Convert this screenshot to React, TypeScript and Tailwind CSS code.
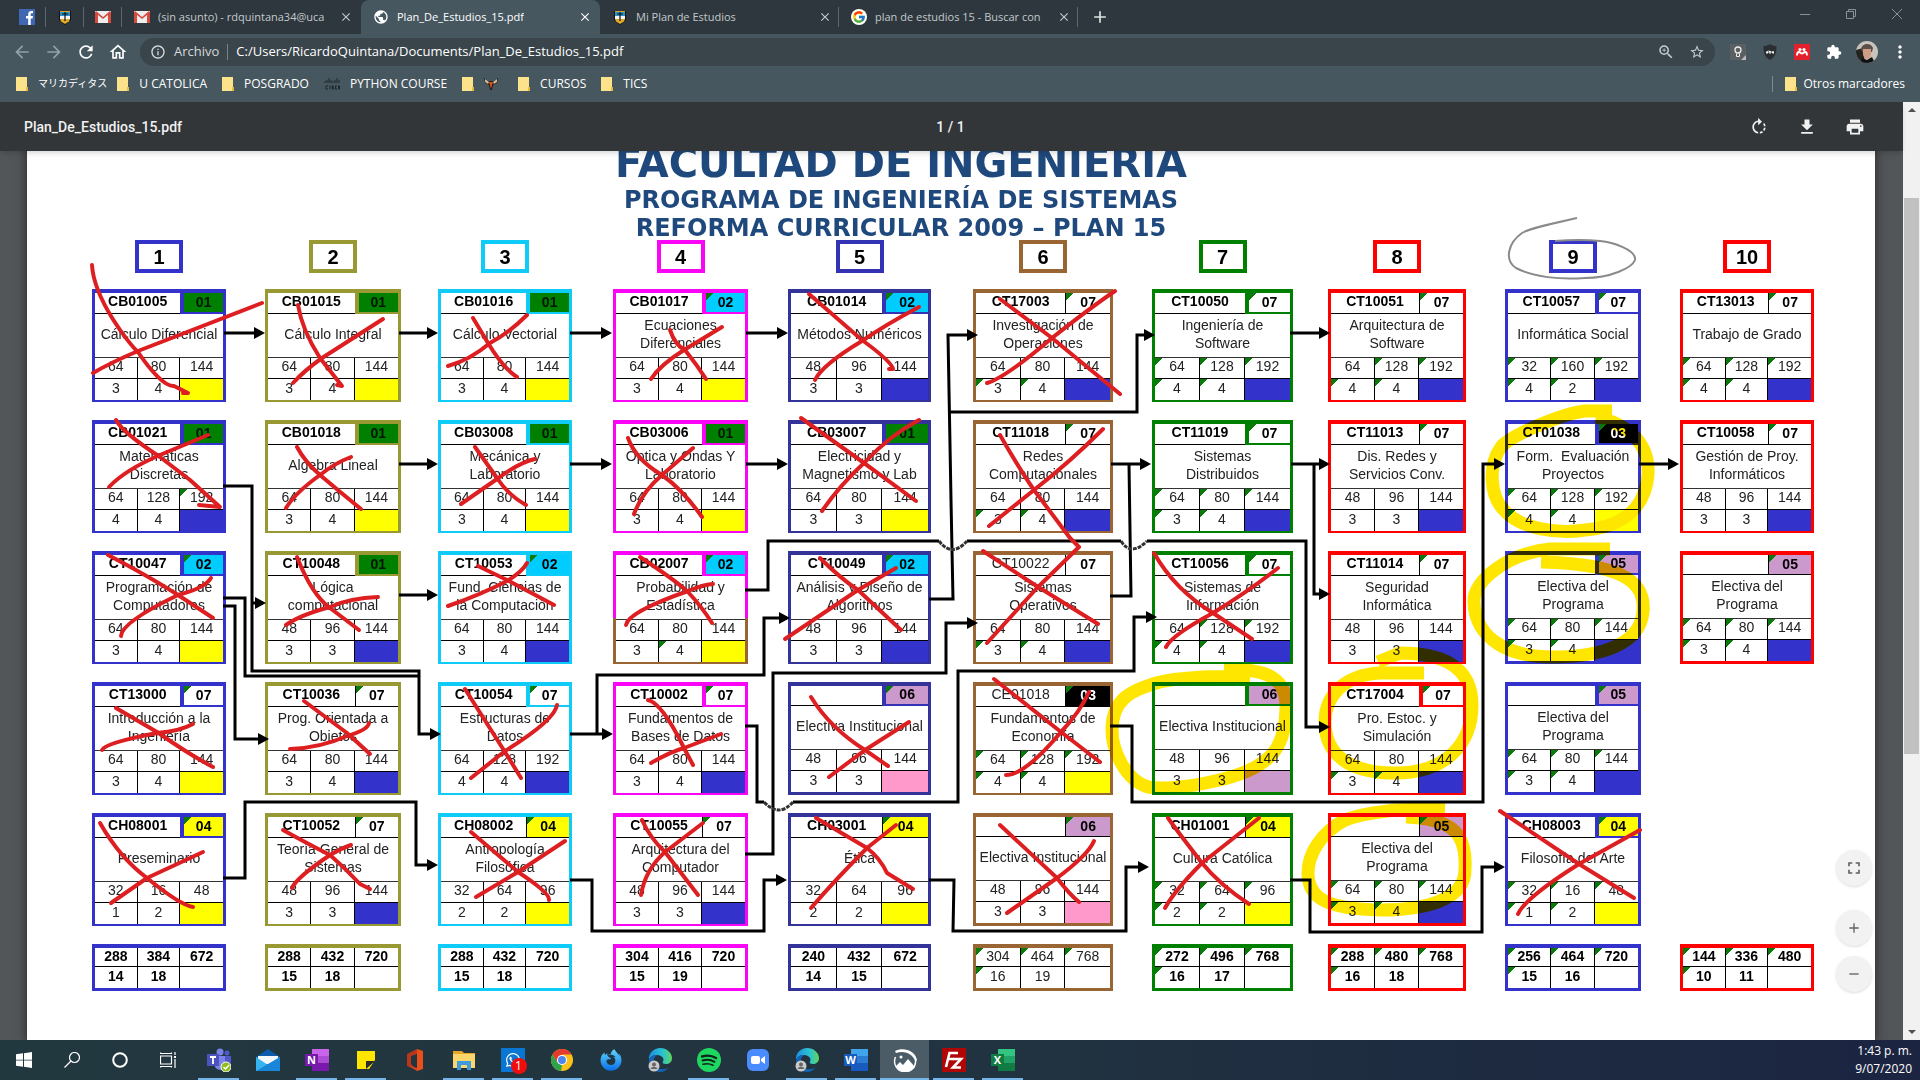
import React from "react";
import {
  MdArrowBack, MdArrowForward, MdRefresh, MdOutlineHome, MdInfoOutline, MdStarBorder, MdZoomIn,
  MdExtension, MdMoreVert, MdRotateRight, MdFileDownload, MdPrint, MdFullscreen, MdPublic, MdClose,
  MdAdd, MdRemove,
} from "react-icons/md";
import { FcGoogle } from "react-icons/fc";
import { FaFirefoxBrowser, FaWhatsapp } from "react-icons/fa";

/* ---------- Curriculum data ---------- */

type Fill = "blue" | "yellow" | "pink" | "plum";

type Course = {
  code: string;
  type: string;
  name: string;
  hours: [number, number, number];
  credits: [number, number];
  fill: Fill;
  marks?: string;
  boxed?: boolean;
  light?: boolean;
  split?: boolean;
};

type Semester = {
  n: number;
  place: string;
  frame: string;
  edge: string;
  courses: (Course | null)[];
  totals: [number, number, number, number, number];
  totalMarks?: string;
  light?: boolean;
};

const c = (
  code: string, type: string, name: string,
  hours: [number, number, number], credits: [number, number],
  fill: Fill, marks = "", extra: Partial<Course> = {},
): Course => ({ code, type, name, hours, credits, fill, marks, ...extra });

const B = { boxed: true };
const ALL = "b12345";

const semesters: Semester[] = [
  {
    n: 1, place: "col-start-2", frame: "bg-[#3333cc]", edge: "border-[#3333cc]",
    courses: [
      c("CB01005", "01", "Cálculo Diferencial", [64, 80, 144], [3, 4], "yellow", "", B),
      c("CB01021", "01", "Matemáticas\nDiscretas", [64, 128, 192], [4, 4], "blue", "3", B),
      c("CT10047", "02", "Programación de\nComputadores", [64, 80, 144], [3, 4], "yellow", "b", B),
      c("CT13000", "07", "Introducción a la\nIngeniería", [64, 80, 144], [3, 4], "yellow", "b", B),
      c("CH08001", "04", "Preseminario", [32, 16, 48], [1, 2], "yellow", "b", B),
    ],
    totals: [288, 384, 672, 14, 18],
  },
  {
    n: 2, place: "col-start-4", frame: "bg-[#999933]", edge: "border-[#999933]",
    courses: [
      c("CB01015", "01", "Cálculo Integral", [64, 80, 144], [3, 4], "yellow", "", B),
      c("CB01018", "01", "Algebra Lineal", [64, 80, 144], [3, 4], "yellow", "", B),
      c("CT10048", "01", "Lógica\ncomputacional", [48, 96, 144], [3, 3], "blue", "", B),
      c("CT10036", "07", "Prog. Orientada a\nObjetos", [64, 80, 144], [3, 4], "blue", "b"),
      c("CT10052", "07", "Teoría General de\nSistemas", [48, 96, 144], [3, 3], "blue", "b"),
    ],
    totals: [288, 432, 720, 15, 18],
  },
  {
    n: 3, place: "col-start-6", frame: "bg-[#0fcbf8]", edge: "border-[#0fcbf8]",
    courses: [
      c("CB01016", "01", "Cálculo Vectorial", [64, 80, 144], [3, 4], "yellow", "", B),
      c("CB03008", "01", "Mecánica y\nLaboratorio", [64, 80, 144], [3, 4], "yellow", "", B),
      c("CT10053", "02", "Fund. Ciencias de\nla Computación", [64, 80, 144], [3, 4], "blue", "b", B),
      c("CT10054", "07", "Estructuras de\nDatos", [64, 128, 192], [4, 4], "blue", "b", B),
      c("CH08002", "04", "Antropología\nFilosófica", [32, 64, 96], [2, 2], "yellow", "b"),
    ],
    totals: [288, 432, 720, 15, 18],
  },
  {
    n: 4, place: "col-start-8", frame: "bg-[#fa05f5]", edge: "border-[#fa05f5]",
    courses: [
      c("CB01017", "02", "Ecuaciones\nDiferenciales", [64, 80, 144], [3, 4], "yellow", "b", B),
      c("CB03006", "01", "Óptica y Ondas Y\nLaboratorio", [64, 80, 144], [3, 4], "yellow", "", B),
      c("CB02007", "02", "Probabilidad y\nEstadística", [64, 80, 144], [3, 4], "yellow", "b5", { boxed: true, split: true }),
      c("CT10002", "07", "Fundamentos de\nBases de Datos", [64, 80, 144], [3, 4], "blue", "b", B),
      c("CT10055", "07", "Arquitectura del\nComputador", [48, 96, 144], [3, 3], "blue", "b"),
    ],
    totals: [304, 416, 720, 15, 19],
  },
  {
    n: 5, place: "col-start-10", frame: "bg-[#333399]", edge: "border-[#3333b4]",
    courses: [
      c("CB01014", "02", "Métodos Numéricos", [48, 96, 144], [3, 3], "blue", "b", B),
      c("CB03007", "01", "Electricidad y\nMagnetismo y Lab", [64, 80, 144], [3, 3], "yellow", "", B),
      c("CT10049", "02", "Análisis y Diseño de\nAlgoritmos", [48, 96, 144], [3, 3], "blue", "b", B),
      c("", "06", "Electiva Institucional", [48, 96, 144], [3, 3], "pink", "b", B),
      c("CH03001", "04", "Ética", [32, 64, 96], [2, 2], "yellow", "b"),
    ],
    totals: [240, 432, 672, 14, 15],
  },
  {
    n: 6, place: "col-start-12", frame: "bg-[#996633]", edge: "border-[#996633]",
    courses: [
      c("CT17003", "07", "Investigación de\nOperaciones", [64, 80, 144], [3, 4], "blue", "b45"),
      c("CT11018", "07", "Redes\nComputacionales", [64, 80, 144], [3, 4], "blue", "b45"),
      c("CT10022", "07", "Sistemas\nOperativos", [64, 80, 144], [3, 4], "blue", "45", { light: true }),
      c("CE01018", "03", "Fundamentos de\nEconomía", [64, 128, 192], [4, 4], "yellow", ALL, { light: true }),
      c("", "06", "Electiva Institucional", [48, 96, 144], [3, 3], "pink", "b"),
    ],
    totals: [304, 464, 768, 16, 19], totalMarks: "1234", light: true,
  },
  {
    n: 7, place: "col-start-14", frame: "bg-[#008000]", edge: "border-[#008000]",
    courses: [
      c("CT10050", "07", "Ingeniería de\nSoftware", [64, 128, 192], [4, 4], "blue", ALL, B),
      c("CT11019", "07", "Sistemas\nDistribuidos", [64, 80, 144], [3, 4], "blue", ALL, B),
      c("CT10056", "07", "Sistemas de\nInformación", [64, 128, 192], [4, 4], "blue", "b2345", B),
      c("", "06", "Electiva Institucional", [48, 96, 144], [3, 3], "plum", "", B),
      c("CH01001", "04", "Cultura Católica", [32, 64, 96], [2, 2], "yellow", ALL),
    ],
    totals: [272, 496, 768, 16, 17], totalMarks: "1234",
  },
  {
    n: 8, place: "col-start-16", frame: "bg-[#ff0000]", edge: "border-[#ff0000]",
    courses: [
      c("CT10051", "07", "Arquitectura de\nSoftware", [64, 128, 192], [4, 4], "blue", "b2345"),
      c("CT11013", "07", "Dis. Redes y\nServicios Conv.", [48, 96, 144], [3, 3], "blue", "b"),
      c("CT11014", "07", "Seguridad\nInformática", [48, 96, 144], [3, 3], "blue", "b"),
      c("CT17004", "07", "Pro. Estoc. y\nSimulación", [64, 80, 144], [3, 4], "blue", "b45", B),
      c("", "05", "Electiva del\nPrograma", [64, 80, 144], [3, 4], "blue", ALL),
    ],
    totals: [288, 480, 768, 16, 18], totalMarks: "1234",
  },
  {
    n: 9, place: "col-start-18", frame: "bg-[#3333cc]", edge: "border-[#3333cc]",
    courses: [
      c("CT10057", "07", "Informática Social", [32, 160, 192], [4, 2], "blue", ALL, B),
      c("CT01038", "03", "Form.  Evaluación\nProyectos", [64, 128, 192], [4, 4], "yellow", ALL, B),
      c("", "05", "Electiva del\nPrograma", [64, 80, 144], [3, 4], "blue", ALL, B),
      c("", "05", "Electiva del\nPrograma", [64, 80, 144], [3, 4], "blue", ALL, B),
      c("CH08003", "04", "Filosofía del Arte", [32, 16, 48], [1, 2], "yellow", ALL, B),
    ],
    totals: [256, 464, 720, 15, 16], totalMarks: "1234",
  },
  {
    n: 10, place: "col-start-20", frame: "bg-[#ff0000]", edge: "border-[#ff0000]",
    courses: [
      c("CT13013", "07", "Trabajo de Grado", [64, 128, 192], [4, 4], "blue", ALL),
      c("CT10058", "07", "Gestión de Proy.\nInformáticos", [48, 96, 144], [3, 3], "blue", "b"),
      c("", "05", "Electiva del\nPrograma", [64, 80, 144], [3, 4], "blue", ALL),
      null,
      null,
    ],
    totals: [144, 336, 480, 10, 11], totalMarks: "1234",
  },
];

const badgeFill: Record<string, string> = {
  "01": "bg-[#008000] text-[#001400]",
  "02": "bg-[#00ccff]",
  "03": "bg-black text-white",
  "04": "bg-[#ffff00]",
  "05": "bg-[#cc99cc]",
  "06": "bg-[#cc99cc]",
  "07": "bg-white",
};

const lastFill: Record<Fill, string> = {
  blue: "bg-[#3333cc]",
  yellow: "bg-[#ffff00]",
  pink: "bg-[#ff99cc]",
  plum: "bg-[#cc99cc]",
};

const CORNER = "bg-[linear-gradient(135deg,#0a7a0a_5px,transparent_5px)]";
const corner = (marks: string | undefined, key: string) => (marks?.includes(key) ? CORNER : "");

/* ---------- Curriculum pieces ---------- */

function CourseCard({ course, frame, edge }: { course: Course; frame: string; edge: string }) {
  const { marks, boxed } = course;
  const bg = course.split ? "bg-[linear-gradient(#fa05f5_67px,#996633_67px)]" : frame;
  return (
    <div className={`h-[113px] px-[3px] pt-1 pb-[3px] ${bg}`}>
      <table className="w-full table-fixed border-separate border-spacing-0 bg-white text-center text-sm leading-4 text-[#222]">
        <tbody>
          <tr className="h-5 text-black">
            <th
              scope="row"
              colSpan={2}
              className={`h-5 border-b border-black p-0 pb-1 ${course.light ? "font-normal text-[#222]" : "font-bold"}`}
            >
              {course.code}
            </th>
            <td
              className={`h-5 p-0 pb-0.5 font-bold ${badgeFill[course.type]} ${corner(marks, "b")} ${
                boxed ? `border-b-2 border-l-4 ${edge}` : "border-b border-l border-black"
              }`}
            >
              {course.type}
            </td>
          </tr>
          <tr className="h-11">
            <td colSpan={3} className="h-11 whitespace-pre border-b border-[#333] p-0 pb-1 align-middle leading-[18px]">
              {course.name}
            </td>
          </tr>
          <tr className="h-[21px]">
            {course.hours.map((h, i) => (
              <td
                key={i}
                className={`h-[21px] border-b border-black p-0 pb-1 ${i < 2 ? "border-r" : ""} ${corner(marks, String(i + 1))}`}
              >
                {h}
              </td>
            ))}
          </tr>
          <tr className="h-[21px]">
            {course.credits.map((h, i) => (
              <td key={i} className={`h-[21px] border-r border-black p-0 pb-1 ${corner(marks, String(i + 4))}`}>
                {h}
              </td>
            ))}
            <td className={`h-[21px] p-0 ${lastFill[course.fill]}`} />
          </tr>
        </tbody>
      </table>
    </div>
  );
}

function TotalsCard({ s }: { s: Semester }) {
  const [a, b, d, e, f] = s.totals;
  return (
    <div className={`h-[47px] px-[3px] pt-1 pb-[3px] ${s.frame}`}>
      <table
        className={`w-full table-fixed border-separate border-spacing-0 bg-white text-center text-sm leading-4 ${
          s.light ? "font-normal text-[#222]" : "font-bold text-black"
        }`}
      >
        <tbody>
          <tr className="h-[19px]">
            {[a, b, d].map((v, i) => (
              <td
                key={i}
                className={`h-[19px] border-b border-black p-0 pb-0.5 ${i < 2 ? "border-r" : ""} ${corner(s.totalMarks, String(i + 1))}`}
              >
                {v}
              </td>
            ))}
          </tr>
          <tr className="h-[21px]">
            {[e, f].map((v, i) => (
              <td key={i} className={`h-[21px] border-r border-black p-0 pb-1 ${corner(s.totalMarks, String(i + 4))}`}>
                {v}
              </td>
            ))}
            <td className="p-0" />
          </tr>
        </tbody>
      </table>
    </div>
  );
}

function SemesterColumn({ s }: { s: Semester }) {
  return (
    <section className={`row-start-1 flex min-w-0 flex-col ${s.place}`}>
      <h3
        className={`flex h-[33px] w-12 items-center justify-center self-center border-4 bg-white text-xl font-bold text-black ${s.edge}`}
      >
        {s.n}
      </h3>
      <div className="mt-4 flex flex-col gap-[18px]">
        {s.courses.map((course, i) =>
          course ? (
            <CourseCard key={i} course={course} frame={s.frame} edge={s.edge} />
          ) : (
            <div key={i} className="h-[113px]" />
          ),
        )}
        <TotalsCard s={s} />
      </div>
    </section>
  );
}

/* ---------- Drawings over the plan ---------- */

const arrows = [
  "M224 333H262", "M399 333H435", "M570 333H609", "M746 333H785", "M1290 333H1327",
  "M399 464H435", "M570 464H609", "M746 464H785", "M1111 464H1148", "M1291 464H1327", "M1639 464H1676",
  "M399 595H435", "M252 603H263",
  "M223 606H235V739H266",
  "M223 486H252V671H419V734H438",
  "M223 878H245V802H416V865H435",
  "M570 880H592V931H764V880H784",
  "M929 880H954L953 931H1126V867H1146",
  "M570 734H610", "M597 734V675H764V618H787",
  "M929 599H953L951 500L948 335H975", "M949 412H1137V335H1152",
  "M745 854H773V673H946V623H975",
  "M1110 726H1132V802H1483V464H1502",
  "M1314 464V594H1327",
  "M1290 880H1310V932H1482V867H1502",
  "M1147 541H1306V727H1327", "M793 802H958V671H1134V617H1154",
];

const plainLines = [
  "M223 598H245V676H419",
  "M745 590H768V541H939", "M967 541H1121",
  "M1129 464L1131 596H1110",
  "M745 726H757V802H764",
];

const jumps = ["M939 541Q952 558 967 541", "M1121 541Q1131 557 1147 541", "M764 802Q779 818 793 802"];

const crosses = [
  "M92 265C94 300 130 345 138 352C150 370 165 387 174 386L188 393L183 393", "M93 373Q110 363 138 351L262 303",
  "M298 305Q302 330 320 358L342 386L337 385", "M293 383Q305 370 322 358L383 319",
  "M473 318L488 343Q503 368 517 377", "M448 366Q470 360 490 343Q510 332 527 315",
  "M670 330Q675 345 685 350Q697 365 706 379", "M651 379Q660 365 684 350L722 327",
  "M809 294L862 340Q892 362 893 369L889 369", "M815 380Q822 365 862 341Q885 325 919 307",
  "M1000 299L1052 338L1120 394", "M987 383Q1005 378 1052 338Q1090 308 1115 291",
  "M116 420Q122 432 160 457L190 480L220 507L199 505", "M109 487Q125 470 160 455L208 435",
  "M297 447Q305 462 320 475Q340 492 361 509", "M286 508Q295 493 320 475Q335 463 351 457",
  "M475 447L497 478Q508 495 526 505", "M461 504L497 479Q520 462 535 459",
  "M628 438Q636 460 662 475Q683 490 702 517", "M634 514Q642 492 662 475L693 448",
  "M801 418L864 463L916 501", "M822 511Q840 485 864 463Q890 435 919 420",
  "M1000 435Q1020 470 1034 490L1070 538L1079 547L1037 588L987 643", "M989 526L1034 490Q1070 462 1103 429",
  "M983 551L1035 585L1098 624",
  "M108 555Q150 577 178 595L213 618", "M121 636Q122 622 178 595Q205 588 211 578",
  "M297 557Q312 595 330 608L359 630", "M286 625Q300 615 330 607Q350 598 378 597",
  "M478 566L507 580L554 605", "M448 606Q480 595 507 581Q522 572 527 563",
  "M640 557Q675 580 688 592Q702 607 712 623", "M626 625Q628 612 688 591Q705 584 713 584",
  "M820 558Q840 578 858 590L901 630", "M785 639L858 590L896 568",
  "M116 708L157 732Q190 755 213 767", "M102 750Q105 743 157 733Q180 731 193 724",
  "M304 701L347 733L370 754", "M290 749Q320 748 347 736Q368 730 369 723",
  "M465 689L505 752L521 778", "M471 778L505 751Q555 720 557 705",
  "M648 700Q662 703 684 748L693 765", "M651 763Q670 752 684 748L721 734",
  "M811 697Q830 728 865 750L888 766", "M829 777L865 750L909 722",
  "M994 679L1061 732L1100 762", "M1006 775Q1025 775 1061 732Q1080 712 1089 692",
  "M100 823Q120 858 147 878Q180 905 193 907", "M111 903L147 878L203 852",
  "M283 830Q310 845 330 855Q345 868 360 884L370 889", "M292 888Q296 878 330 855Q342 848 351 845",
  "M471 832L518 872Q550 893 549 900", "M476 897L518 872L565 841",
  "M642 820Q650 838 665 852L698 895", "M641 895Q645 870 665 852L703 823",
  "M816 818L867 848Q880 858 887 873L913 889", "M811 908Q835 880 867 848L896 825",
  "M1000 825L1057 878Q1070 895 1079 902", "M1007 913L1057 878Q1088 855 1094 841",
  "M1154 553Q1175 590 1213 613L1252 639", "M1166 647Q1172 635 1213 613Q1250 590 1278 568",
  "M1168 818Q1178 832 1202 863Q1220 885 1249 904", "M1165 908Q1175 890 1202 863L1259 818",
  "M1500 811L1579 864L1634 898", "M1518 914Q1525 898 1579 864L1640 830",
];

const highlights = [
  "M1612 411H1585C1560 414 1510 436 1501 447C1488 465 1490 495 1503 509C1520 530 1560 534 1585 530C1620 527 1645 510 1648 475C1650 445 1630 424 1596 417",
  "M1610 549H1550C1510 553 1472 580 1474 603C1476 640 1510 657 1553 657C1600 657 1640 645 1643 612C1646 580 1620 564 1541 562",
  "M1224 669C1260 669 1286 674 1286 705C1286 745 1275 768 1215 781C1185 788 1160 789 1148 787C1125 780 1112 750 1112 730C1112 700 1130 690 1160 682C1190 676 1220 676 1250 677",
  "M1424 673H1380C1345 675 1325 695 1325 722C1325 755 1350 773 1395 773C1445 773 1472 745 1472 705C1472 665 1440 653 1400 653L1378 662",
  "M1445 809C1400 808 1365 813 1345 820C1320 833 1308 855 1308 873C1308 900 1330 909 1380 910C1430 910 1465 898 1465 870C1467 835 1455 819 1406 817",
];

function PlanDrawings() {
  const box = "0 0 1848 896";
  return (
    <>
      <svg aria-hidden="true" viewBox={box} preserveAspectRatio="none" className="pointer-events-none absolute top-0 left-0 h-[896px] w-full">
        <defs>
          <marker id="head" viewBox="0 0 11 12" refX="8" refY="6" markerWidth="11" markerHeight="12" markerUnits="userSpaceOnUse" orient="auto">
            <path d="M0 0L11 6L0 12Z" fill="#000" />
          </marker>
        </defs>
        <g transform="translate(-27 -144)" fill="none" stroke="#000" strokeWidth="3">
          {arrows.map((d) => <path key={d} d={d} markerEnd="url(#head)" />)}
          {plainLines.map((d) => <path key={d} d={d} />)}
          {jumps.map((d) => <path key={d} d={d} stroke="#333" strokeDasharray="4 1" />)}
          <path
            stroke="#8a8a8a"
            strokeWidth="2"
            d="M1577 218C1550 224 1530 228 1522 233C1508 243 1504 260 1516 268C1533 277 1560 280 1585 278C1610 278 1632 268 1635 260C1637 250 1612 242 1600 241Q1580 239 1555 241"
          />
        </g>
      </svg>
      <svg aria-hidden="true" viewBox={box} preserveAspectRatio="none" className="pointer-events-none absolute top-0 left-0 h-[896px] w-full mix-blend-multiply">
        <g transform="translate(-27 -144)" fill="none" stroke="#ffe600" strokeWidth="13" strokeLinejoin="round">
          {highlights.map((d) => <path key={d} d={d} />)}
        </g>
      </svg>
      <svg aria-hidden="true" viewBox={box} preserveAspectRatio="none" className="pointer-events-none absolute top-0 left-0 h-[896px] w-full">
        <g transform="translate(-27 -144)" fill="none" stroke="#de1f22" strokeWidth="4" strokeLinecap="round" strokeLinejoin="round">
          {crosses.map((d) => <path key={d} d={d} />)}
        </g>
      </svg>
    </>
  );
}

/* ---------- Browser icons ---------- */

const Gmail = () => (
  <svg viewBox="0 0 16 12" className="h-3 w-4 shrink-0">
    <path d="M0 0h16v12H0z" fill="#eee" />
    <path d="M0 12V1l3 2v9zM16 12V1l-3 2v9z" fill="#d54b3d" />
    <path d="M0 1.500L1 0l7 6 7-6 1 1.500-8 6.500z" fill="#d54b3d" />
  </svg>
);

const Shield = () => (
  <svg viewBox="0 0 12 15" className="h-[15px] w-3 shrink-0">
    <path d="M0 1h12v9l-6 5-6-5z" fill="#111" />
    <path d="M1 2h10v4H1z" fill="#2b93c9" />
    <path d="M1 1h10v1H1z" fill="#d9a520" />
    <path d="M1 6h10v3H1z" fill="#f5f5f5" />
    <path d="M1 9h10l-1 2.500-4 2.500-4-2.500z" fill="#e0ab2a" />
    <path d="M6 2v9M3 4h6" stroke="#111" strokeWidth="1.200" />
  </svg>
);

const Facebook = () => (
  <svg viewBox="0 0 16 16" className="size-4">
    <path d="M0 0h16v16H0z" fill="#4267b2" />
    <path d="M9.200 16V9.500H7V7h2.200V5.300C9.200 3 10.500 2 12.500 2H14v2.300h-1.200c-.8 0-1.100.4-1.100 1.100V7H14l-.4 2.500h-1.900V16z" fill="#fff" />
  </svg>
);

const Folder = () => (
  <svg viewBox="0 0 12 14" className="h-3.5 w-3 shrink-0">
    <path d="M0 0h11v10l1 1v3H0z" fill="#fde28c" />
    <path d="M10 10h2v4h-2z" fill="#e9b93c" />
  </svg>
);

const Cisco = () => (
  <svg viewBox="0 0 16 12" className="h-3 w-4 shrink-0" fill="none" stroke="#1c262b">
    <path d="M1 3v2M3 2v3M5 0v5M7 2v3M9 3v2M11 2v3M13 0v5M15 2v3" />
    <path d="M4 8H2v3h2M6 7.500V11M10 8H8v1.500h1.500V11H7.500M13 8h-1.500v3H13M14.500 8h1v3h-1z" />
  </svg>
);

const Owl = () => (
  <svg viewBox="0 0 14 14" className="size-3.5 shrink-0">
    <path d="M0 1l4 3h6l4-3-1 5-4 2-1 5H6L5 8 1 6z" fill="#241c18" />
    <path d="M1 2l4 3-1 2-3-2zM13 2L9 5l1 2 3-2z" fill="#cdb9a0" />
    <path d="M5 5h4l-1 3-1 4-1-4z" fill="#d9541e" />
  </svg>
);

function Tab({ icon, title, active, line }: { icon: React.ReactNode; title: string; active?: boolean; line?: boolean }) {
  return (
    <div
      className={`flex h-[34px] w-[239px] items-center gap-1.5 pr-2 pl-3 ${
        active ? "rounded-t-lg bg-[#46575f] text-white" : "text-[#c3c9cc]"
      }`}
    >
      <button role="tab" aria-selected={!!active} className="flex min-w-0 flex-1 items-center gap-2">
        <span className="flex w-4 shrink-0 justify-center">{icon}</span>
        <span className="overflow-hidden text-[11px] whitespace-nowrap">{title}</span>
      </button>
      <button aria-label={`Cerrar ${title}`} className="shrink-0"><MdClose className="size-3.5" /></button>
      {line && <span className="-mr-2 h-5 w-px bg-[#5d686e]" />}
    </div>
  );
}

const pinned = [
  { label: "Facebook", icon: <Facebook /> },
  { label: "Universidad Católica", icon: <Shield /> },
  { label: "Gmail", icon: <Gmail /> },
];

const bookmarks: { icon: React.ReactNode; label: string; kana?: boolean }[] = [
  { icon: <Folder />, label: "マリカディタス", kana: true },
  { icon: <Folder />, label: "U CATOLICA" },
  { icon: <Folder />, label: "POSGRADO" },
  { icon: <Cisco />, label: "PYTHON COURSE" },
  { icon: <Folder />, label: "" },
  { icon: <Folder />, label: "CURSOS" },
  { icon: <Folder />, label: "TICS" },
];

function BrowserChrome() {
  return (
    <header className="shrink-0 bg-[#46575f]">
      <div className="flex h-[34px] items-center bg-[#2d373d] pl-2">
        {pinned.map((p) => (
          <button key={p.label} aria-label={p.label} className="flex h-5 w-[38px] items-center justify-center border-r border-[#5d686e]">
            {p.icon}
          </button>
        ))}
        <Tab icon={<Gmail />} title="(sin asunto) - rdquintana34@uca" />
        <Tab icon={<MdPublic className="size-4" />} title="Plan_De_Estudios_15.pdf" active />
        <Tab icon={<Shield />} title="Mi Plan de Estudios" line />
        <Tab icon={<span className="rounded-full bg-white p-px"><FcGoogle className="size-3.5" /></span>} title="plan de estudios 15 - Buscar con" line />
        <button aria-label="Nueva pestaña" className="ml-3 text-[#dfe3e5]"><MdAdd className="size-5" /></button>
        <div className="mr-[18px] mb-1.5 ml-auto flex items-center gap-9 text-[#87929a]">
          <button aria-label="Minimizar"><svg viewBox="0 0 10 10" className="size-2.5"><path d="M0 5.500h10" stroke="currentColor" /></svg></button>
          <button aria-label="Restaurar">
            <svg viewBox="0 0 10 10" className="size-2.5" fill="none" stroke="currentColor"><path d="M.5 2.500h7v7h-7zM2.500 2.500v-2h7v7h-2" /></svg>
          </button>
          <button aria-label="Cerrar ventana"><svg viewBox="0 0 10 10" className="size-2.5" stroke="currentColor"><path d="M0 0l10 10M10 0L0 10" /></svg></button>
        </div>
      </div>

      <div className="flex h-9 items-center pr-3 pl-3">
        <div className="flex items-center gap-3 text-white">
          <button aria-label="Atrás" className="text-[#92a0a7]"><MdArrowBack className="size-5" /></button>
          <button aria-label="Adelante" className="text-[#92a0a7]"><MdArrowForward className="size-5" /></button>
          <button aria-label="Recargar"><MdRefresh className="size-5" /></button>
          <button aria-label="Inicio"><MdOutlineHome className="size-5" /></button>
        </div>
        <div className="ml-3 flex h-7 flex-1 items-center rounded-full bg-[#3a454b] pr-2.5 pl-2.5">
          <MdInfoOutline className="size-4 text-[#d5dadd]" />
          <label htmlFor="url" className="ml-2 text-[13px] text-[#d5dadd]">Archivo</label>
          <span className="mx-2 h-4 w-px bg-[#78848a]" />
          <input
            id="url"
            readOnly
            defaultValue="C:/Users/RicardoQuintana/Documents/Plan_De_Estudios_15.pdf"
            className="min-w-0 flex-1 bg-transparent text-[13px] text-white outline-none"
          />
          <button aria-label="Zoom" className="mr-3.5 text-[#c6ccd0]"><MdZoomIn className="size-[18px]" /></button>
          <button aria-label="Añadir a marcadores" className="text-[#c6ccd0]"><MdStarBorder className="size-4" /></button>
        </div>
        <div className="ml-[15px] flex items-center gap-4 text-white">
          <button aria-label="Sugerencias">
            <svg viewBox="0 0 16 16" className="size-4"><path d="M0 0h16v16H0z" fill="#5a5f61" /><circle cx="8" cy="6" r="3" fill="none" stroke="#eee" strokeWidth="1.300" /><path d="M6.500 9.500v3h3v-3" fill="none" stroke="#eee" /><path d="M11 16l5-5v5z" fill="#bbb" /></svg>
          </button>
          <button aria-label="Bloqueador">
            <svg viewBox="0 0 14 16" className="size-4"><path d="M7 0c2 1.500 4 2 6.500 2 0 7-1 11-6.500 14C1.500 13 .5 9 .5 2 3 2 5 1.500 7 0z" fill="#2b2f31" /><path d="M3.500 9.500V8l1-1v2.500M6 6.500V9h2V7.500H6M10.500 9.500V7.500h-1V9h1" stroke="#eee" fill="none" /></svg>
          </button>
          <button aria-label="Mendeley">
            <svg viewBox="0 0 16 16" className="size-4"><path d="M0 0h16v16H0z" fill="#e4202c" /><path d="M3 11.500c0-2.500.5-3.500 2-3.500s1.500 1.500 3 1.500S9.500 8 11 8s2 1 2 3.500" fill="none" stroke="#fff" strokeWidth="1.800" /><circle cx="6" cy="5.500" r="1.600" fill="#fff" /><circle cx="10" cy="5.500" r="1.600" fill="#fff" /></svg>
          </button>
          <button aria-label="Extensiones"><MdExtension className="size-4" /></button>
          <button aria-label="Perfil" className="-mx-0.5">
            <svg viewBox="0 0 22 22" className="size-[22px] rounded-full">
              <path d="M0 0h22v22H0z" fill="#c9c4bb" />
              <path d="M0 9l7-2 2 15H0z" fill="#23231f" />
              <path d="M5 8c1-6 10-7 12-1l-1 4H6z" fill="#5a504a" />
              <path d="M7 8h8v5c0 3-2 5-4 5s-4-3-4-5z" fill="#cf9d83" />
              <path d="M6 17l5 2 5-3 3 6H5z" fill="#111" />
            </svg>
          </button>
          <button aria-label="Menú" className="-mx-0.5"><MdMoreVert className="size-5" /></button>
        </div>
      </div>

      <nav aria-label="Marcadores" className="flex h-8 items-center pr-[15px] pb-1 pl-4 text-xs text-white">
        {bookmarks.map((b, i) => (
          <a
            key={i}
            href="#"
            className={`flex items-center gap-2.5 ${b.kana ? "mr-2.5" : b.label ? "mr-[15px]" : "mr-5"}`}
          >
            {b.icon}
            {b.label ? (
              <span className={`whitespace-nowrap ${b.kana ? "text-[10px]" : ""}`}>{b.label}</span>
            ) : (
              <Owl />
            )}
          </a>
        ))}
        <a href="#" className="ml-auto flex h-4 items-center gap-1.5 border-l border-[#7d8a91] pl-3 whitespace-nowrap">
          <Folder />
          <span>Otros marcadores</span>
        </a>
      </nav>
    </header>
  );
}

/* ---------- Taskbar ---------- */

const Letter = ({ ch, dark, mid, light }: { ch: string; dark: string; mid: string; light: string }) => (
  <svg viewBox="0 0 24 24" className="size-6">
    <path d="M7 1h17v22H7z" fill={light} />
    <path d="M7 8h17v7H7z" fill={mid} />
    <path d="M7 15h17v8H7z" fill={dark} />
    <path d="M0 6h13v12H0z" fill={dark} />
    <text x="6.500" y="16" textAnchor="middle" fontSize="11" fontWeight="700" fill="#fff" fontFamily="Open Sans, sans-serif">{ch}</text>
  </svg>
);

const Edge = () => (
  <svg viewBox="0 0 24 24" className="size-6">
    <defs>
      <linearGradient id="edgeTop" x1="0" x2="1"><stop offset="0" stopColor="#1b8fe0" /><stop offset=".6" stopColor="#2cc3d2" /><stop offset="1" stopColor="#5fd65b" /></linearGradient>
    </defs>
    <path d="M1 12C0 5 6 0 12 0c7 0 12 5 12 10 0 4-3 6-6 6-3 0-4-1-3-2.500C17 10 13 7 9 7c-4 0-7 2-8 5z" fill="url(#edgeTop)" />
    <path d="M1 12c1-3 4-5 8-5-3 2-4 5-3 8 1 4 5 7 10 6 2 0 4-1 5-2-3 4-6 5-9 5C6 24 1 19 1 12z" fill="#1464b4" />
    <circle cx="6" cy="18" r="5.500" fill="#c9c9c9" />
    <circle cx="6" cy="16.500" r="2" fill="#666" />
    <path d="M2.500 21c1-3 6-3 7 0z" fill="#666" />
  </svg>
);

const apps: { label: string; open?: boolean; active?: boolean; icon: React.ReactNode }[] = [
  {
    label: "Teams", open: true,
    icon: (
      <svg viewBox="0 0 24 24" className="size-6">
        <circle cx="13" cy="4" r="3.500" fill="#7b83eb" /><circle cx="20" cy="5" r="2.500" fill="#5059c9" />
        <path d="M8 8h11v9a6 6 0 0 1-11 2z" fill="#7b83eb" /><path d="M18 8h6v7a4 4 0 0 1-6 4z" fill="#5059c9" />
        <path d="M0 6h12v12H0z" fill="#4b53bc" />
        <path d="M3 9h6M6 9v7" stroke="#fff" strokeWidth="1.800" />
        <circle cx="19" cy="19" r="5" fill="#8cbd18" stroke="#fff" /><path d="M16.500 19l2 2 3.500-4" stroke="#fff" fill="none" strokeWidth="1.500" />
      </svg>
    ),
  },
  {
    label: "Correo",
    icon: (
      <svg viewBox="0 0 24 24" className="size-6">
        <path d="M0 9l12-8 12 8v3H0z" fill="#0b5cab" /><path d="M2 8h20v8H2z" fill="#f4f8fb" />
        <path d="M0 9l12 8L24 9v14H0z" fill="#35b5f0" /><path d="M0 23L24 9v14z" fill="#1a86d9" />
      </svg>
    ),
  },
  { label: "OneNote", open: true, icon: <Letter ch="N" dark="#7719aa" mid="#ae4bd5" light="#ca64ea" /> },
  {
    label: "Notas", open: true,
    icon: <svg viewBox="0 0 24 24" className="size-6"><path d="M3 3h18v9l-6 9H3z" fill="#ffe600" /><path d="M12 21v-8h9z" fill="#2b2b2b" /></svg>,
  },
  {
    label: "Office",
    icon: (
      <svg viewBox="0 0 24 24" className="size-6">
        <path d="M4 6l10-5v5L8 8v8l6 6-10-4z" fill="#b8371c" /><path d="M14 1l6 2v18l-6 2z" fill="#ea4e1a" /><path d="M6 18l8 2v3z" fill="#e0451c" />
      </svg>
    ),
  },
  {
    label: "Explorador", open: true,
    icon: (
      <svg viewBox="0 0 24 24" className="size-6">
        <path d="M1 3h9l2 2h11v15H1z" fill="#e3a82b" /><path d="M1 6h22v14H1z" fill="#fbd66b" />
        <path d="M5 13h14v9h-4v-5H9v5H5z" fill="#3f9be0" />
      </svg>
    ),
  },
  {
    label: "WhatsApp", open: true,
    icon: (
      <span className="relative flex size-6 items-center justify-center bg-[#0a76d4] text-white">
        <FaWhatsapp className="size-4" />
        <span className="absolute top-2.5 left-2.5 flex size-4 items-center justify-center rounded-full bg-[#f20d0d] text-xs">1</span>
      </span>
    ),
  },
  {
    label: "Chrome", open: true,
    icon: (
      <svg viewBox="0 0 24 24" className="size-[22px]">
        <circle cx="12" cy="12" r="12" fill="#fbc116" />
        <path d="M1.600 6A12 12 0 0 1 22.400 6H12L7 15z" fill="#e33b2e" />
        <path d="M1.600 6L7 15l5 2.500L11 24A12 12 0 0 1 1.600 6z" fill="#2fa24c" />
        <circle cx="12" cy="12" r="5.500" fill="#fff" /><circle cx="12" cy="12" r="4.300" fill="#4a86ee" />
      </svg>
    ),
  },
  {
    label: "Firefox",
    icon: (
      <span>
        <svg className="absolute size-0" aria-hidden="true">
          <linearGradient id="fox" x1="0" y1="0" x2="0" y2="1"><stop offset="0" stopColor="#5fd8ff" /><stop offset="1" stopColor="#0a6fe8" /></linearGradient>
        </svg>
        <FaFirefoxBrowser className="size-[22px]" fill="url(#fox)" />
      </span>
    ),
  },
  { label: "Edge", icon: <Edge /> },
  {
    label: "Spotify", open: true,
    icon: (
      <svg viewBox="0 0 24 24" className="size-6" fill="none" stroke="#10251a" strokeLinecap="round">
        <circle cx="12" cy="12" r="12" fill="#1ed760" stroke="none" />
        <path d="M5 8.500c5-1.500 10-1 14 1.500" strokeWidth="2.400" /><path d="M5.500 12.500c4-1.200 8.500-.8 12 1.300" strokeWidth="2" /><path d="M6 16.300c3.500-1 7-.6 10 1" strokeWidth="1.600" />
      </svg>
    ),
  },
  {
    label: "Zoom",
    icon: <svg viewBox="0 0 24 24" className="size-6"><rect width="22" height="22" x="1" y="1" rx="6" fill="#4a8cff" /><rect x="5" y="8" width="9" height="8" rx="2" fill="#fff" /><path d="M15 11l4-3v8l-4-3z" fill="#fff" /></svg>,
  },
  { label: "Edge 2", open: true, icon: <Edge /> },
  { label: "Word", open: true, icon: <Letter ch="W" dark="#185abd" mid="#2b7cd3" light="#41a5ee" /> },
  {
    label: "Imagen", open: true, active: true,
    icon: (
      <svg viewBox="0 0 24 24" className="size-6">
        <path d="M2.500 9A10.500 10.500 0 1 0 22.500 12" fill="none" stroke="#fff" strokeWidth="1.400" />
        <path d="M2 3C10-1 22 2 24 12l-1.500 2C20 6 12 2 3 5z" fill="#fff" />
        <path d="M3 18l4-4 3 3 5-6 7 8c-3 5-14 8-19-1z" fill="#fff" /><circle cx="8" cy="9" r="1.500" fill="#fff" />
      </svg>
    ),
  },
  {
    label: "FileZilla", open: true,
    icon: (
      <svg viewBox="0 0 24 24" className="size-6" fill="none" stroke="#fff" strokeWidth="2.600">
        <path d="M0 0h24v24H0z" fill="#b00606" stroke="none" /><path d="M4 19L7.500 5H16M6 11h6" /><path d="M11 11h8l-8 8.500h8" />
      </svg>
    ),
  },
  { label: "Excel", open: true, icon: <Letter ch="X" dark="#107c41" mid="#21a366" light="#33c481" /> },
];

function Taskbar() {
  return (
    <footer className="flex h-10 shrink-0 bg-linear-to-r from-[#22383f] via-[#213340] to-[#1b2441] pr-2 text-white">
      <button aria-label="Inicio" className="flex w-12 items-center justify-center">
        <svg viewBox="0 0 16 16" className="size-4" fill="#fff"><path d="M0 2.300L7 1.300v6.400H0zM8 1.200L16 0v7.700H8zM0 8.500h7v6.300l-7-1zM8 8.500h8V16l-8-1.200z" /></svg>
      </button>
      <button aria-label="Buscar" className="flex w-12 items-center justify-center">
        <svg viewBox="0 0 16 16" className="size-4" fill="none" stroke="#fff" strokeWidth="1.200"><circle cx="10.500" cy="5.500" r="5" /><path d="M7 9l-6.500 6.500" /></svg>
      </button>
      <button aria-label="Cortana" className="flex w-12 items-center justify-center">
        <svg viewBox="0 0 16 16" className="size-4" fill="none" stroke="#fff" strokeWidth="2"><circle cx="8" cy="8" r="6.800" /></svg>
      </button>
      <button aria-label="Vista de tareas" className="mr-0.5 flex w-12 items-center justify-center">
        <svg viewBox="0 0 16 16" className="size-4" fill="none" stroke="#fff" strokeWidth="1.200"><path d="M.5 4h11v8H.5zM.5 2V.5M11.500 2V.5M.5 14v1.500M11.500 14v1.500M1 1.500h10M1 14.500h10M15 0v3M15 7v9" /><path d="M14 4h2v2h-2z" fill="#fff" stroke="none" /></svg>
      </button>
      {apps.map((a) => (
        <button
          key={a.label}
          aria-label={a.label}
          className={`relative flex w-[49px] items-center justify-center ${a.active ? "bg-[#4c5c66]" : ""}`}
        >
          {a.icon}
          {a.open && <span className={`absolute bottom-0 h-0.5 bg-[#76b5ea] ${a.active ? "inset-x-0" : "inset-x-1"}`} />}
        </button>
      ))}
      <div className="ml-auto flex flex-col items-end justify-center text-right text-xs leading-[18px]">
        <time>1:43 p. m.</time>
        <span>9/07/2020</span>
      </div>
    </footer>
  );
}

/* ---------- PDF viewer ---------- */

const fab = "flex size-9 items-center justify-center rounded-full bg-[#f2f2f2] text-[#5f6368] shadow";

export default function App() {
  return (
    <div className="flex h-screen flex-col overflow-hidden bg-[#525659] font-['Open_Sans','Noto_Sans_CJK_JP',sans-serif]">
      <BrowserChrome />
      <div className="flex min-h-0 flex-1">
        <div className="flex min-w-0 flex-1 flex-col">
          <div className="relative z-10 grid h-[49px] shrink-0 grid-cols-3 items-center bg-[#323639] pr-[38px] pl-6 font-[Roboto,sans-serif] text-sm text-[#f1f1f1] shadow-md">
            <span className="font-medium">Plan_De_Estudios_15.pdf</span>
            <span className="pl-3 text-center font-medium">1 / 1</span>
            <div className="flex justify-end gap-7">
              <button aria-label="Girar"><MdRotateRight className="size-5" /></button>
              <button aria-label="Descargar"><MdFileDownload className="size-5" /></button>
              <button aria-label="Imprimir"><MdPrint className="size-5" /></button>
            </div>
          </div>
          <main className="relative flex min-h-0 flex-1 overflow-hidden pr-7 pl-[27px]">
            <article className="relative isolate -mt-[7px] flex-1 bg-white font-['Liberation_Sans',sans-serif] shadow-[0_0_8px_2px_#333]">
              <header className="-mb-0.5 pr-[100px] text-center font-['DejaVu_Sans',sans-serif] font-bold text-[#1f497d]">
                <h1 className="mb-1 text-[40px] leading-[38px]">FACULTAD DE INGENIERÍA</h1>
                <h2 className="text-2xl leading-7">PROGRAMA DE INGENIERÍA DE SISTEMAS</h2>
                <h2 className="text-2xl leading-7">REFORMA CURRICULAR 2009 – PLAN 15</h2>
              </header>
              <div className="grid grid-cols-[65fr_134fr_39fr_136fr_37fr_134fr_41fr_135fr_40fr_143fr_42fr_140fr_39fr_141fr_35fr_138fr_39fr_136fr_39fr_134fr_61fr]">
                {semesters.map((s) => <SemesterColumn key={s.n} s={s} />)}
              </div>
              <PlanDrawings />
            </article>
            <div className="absolute right-[31px] bottom-12 flex flex-col">
              <button aria-label="Ajustar a la página" className={`mb-6 ${fab}`}><MdFullscreen className="size-5" /></button>
              <button aria-label="Acercar" className={`mb-2.5 ${fab}`}><MdAdd className="size-4" /></button>
              <button aria-label="Alejar" className={fab}><MdRemove className="size-4" /></button>
            </div>
          </main>
        </div>
        <div className="flex w-[17px] shrink-0 flex-col items-center justify-between bg-[#f1f1f1] py-1.5 text-[#505050]">
          <button aria-label="Subir"><svg viewBox="0 0 8 4" className="h-1 w-2"><path d="M0 4l4-4 4 4z" fill="currentColor" /></svg></button>
          <div className="mt-[86px] mb-auto h-[60%] w-[15px] bg-[#c1c1c1]" />
          <button aria-label="Bajar"><svg viewBox="0 0 8 4" className="h-1 w-2"><path d="M0 0h8L4 4z" fill="currentColor" /></svg></button>
        </div>
      </div>
      <Taskbar />
    </div>
  );
}
